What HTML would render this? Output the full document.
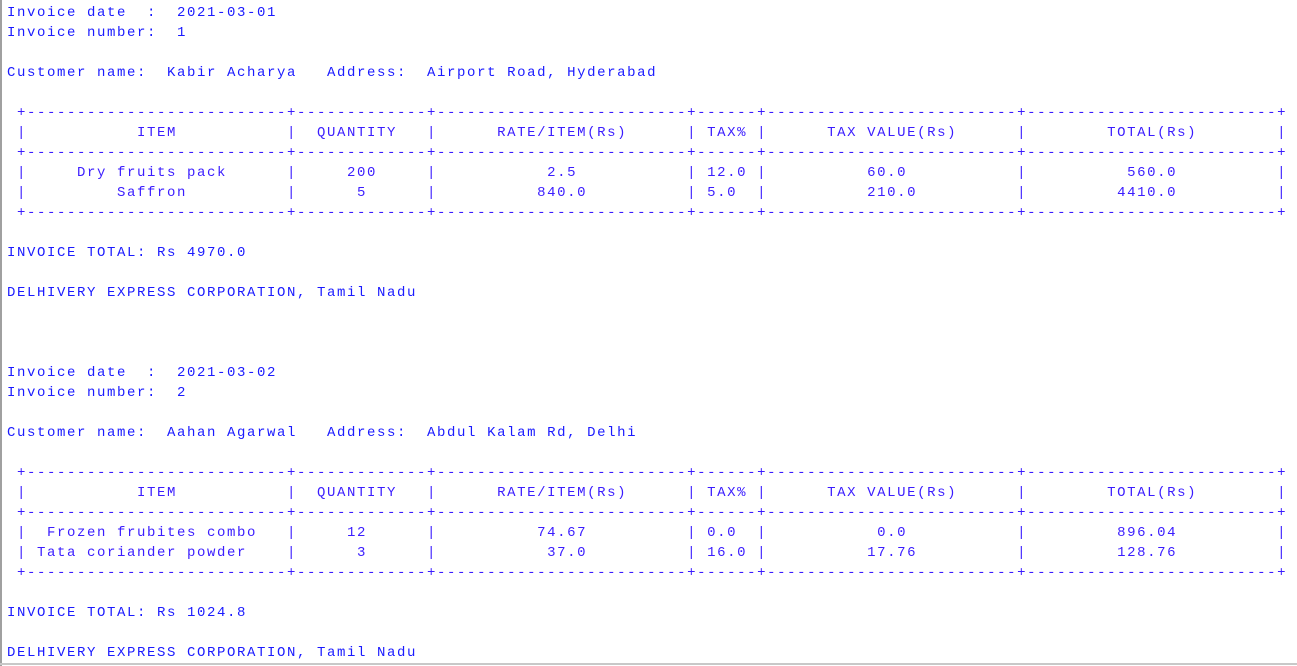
<!DOCTYPE html>
<html><head><meta charset="utf-8"><style>
html,body{margin:0;padding:0;background:#fff;width:1297px;height:666px;overflow:hidden;position:relative}
.lb{position:absolute;left:0;top:0;width:2px;height:666px;background:#a0a0a0}
.bb{position:absolute;left:0;top:663px;width:1297px;height:2px;background:#c8c8c8}
pre{position:absolute;left:7px;top:3px;margin:0;font-family:"Liberation Mono",monospace;font-size:14px;letter-spacing:1.6px;line-height:20px;color:#1a1aff}
.t{color:#3a1cff}
</style></head><body>
<div class="lb"></div><div class="bb"></div>
<pre>Invoice date  :  2021-03-01
Invoice number:  1

Customer name:  Kabir Acharya   Address:  Airport Road, Hyderabad

<span class="t"> +--------------------------+-------------+-------------------------+------+-------------------------+-------------------------+
 |           ITEM           |  QUANTITY   |      RATE/ITEM(Rs)      | TAX% |      TAX VALUE(Rs)      |        TOTAL(Rs)        |
 +--------------------------+-------------+-------------------------+------+-------------------------+-------------------------+
 |     Dry fruits pack      |     200     |           2.5           | 12.0 |          60.0           |          560.0          |
 |         Saffron          |      5      |          840.0          | 5.0  |          210.0          |         4410.0          |
 +--------------------------+-------------+-------------------------+------+-------------------------+-------------------------+</span>

INVOICE TOTAL: Rs 4970.0

DELHIVERY EXPRESS CORPORATION, Tamil Nadu



Invoice date  :  2021-03-02
Invoice number:  2

Customer name:  Aahan Agarwal   Address:  Abdul Kalam Rd, Delhi

<span class="t"> +--------------------------+-------------+-------------------------+------+-------------------------+-------------------------+
 |           ITEM           |  QUANTITY   |      RATE/ITEM(Rs)      | TAX% |      TAX VALUE(Rs)      |        TOTAL(Rs)        |
 +--------------------------+-------------+-------------------------+------+-------------------------+-------------------------+
 |  Frozen frubites combo   |     12      |          74.67          | 0.0  |           0.0           |         896.04          |
 | Tata coriander powder    |      3      |           37.0          | 16.0 |          17.76          |         128.76          |
 +--------------------------+-------------+-------------------------+------+-------------------------+-------------------------+</span>

INVOICE TOTAL: Rs 1024.8

DELHIVERY EXPRESS CORPORATION, Tamil Nadu</pre>
</body></html>
